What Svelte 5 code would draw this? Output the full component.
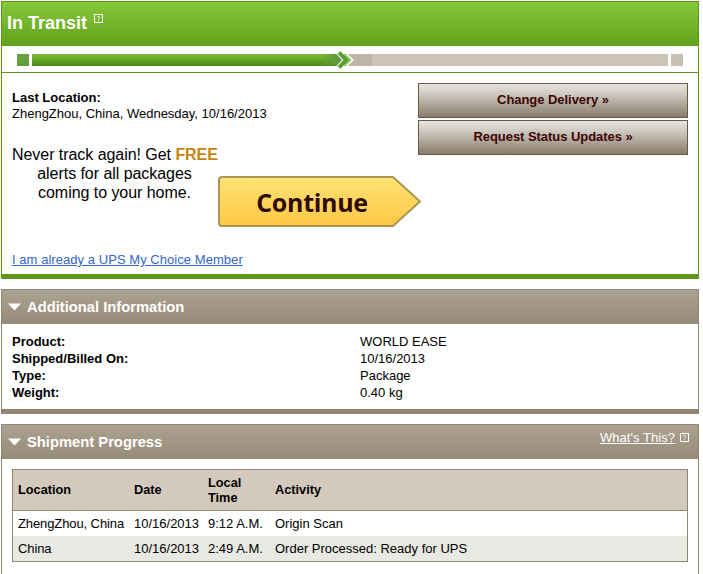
<script lang="ts">
	const info = [
		['Product:', 'WORLD EASE'],
		['Shipped/Billed On:', '10/16/2013'],
		['Type:', 'Package'],
		['Weight:', '0.40 kg'],
	];
	const scans = [
		['ZhengZhou, China', '10/16/2013', '9:12 A.M.', 'Origin Scan'],
		['China', '10/16/2013', '2:49 A.M.', 'Order Processed: Ready for UPS'],
	];
</script>

{#snippet help()}
	<svg class="help" width="9" height="9" viewBox="0 0 9 9" aria-hidden="true">
		<rect x="0.5" y="0.5" width="8" height="8" fill="none" stroke="#fff" />
		<path d="M3.2 3.2 L3.6 2.6 H5.2 L5.7 3.2 V3.9 L4.5 4.7 V5.4 M4.5 6.2 V7" fill="none" stroke="#fff" stroke-width="0.8" />
	</svg>
{/snippet}

{#snippet arrow()}
	<svg class="arrow" width="14" height="8" viewBox="0 0 14 8" aria-hidden="true">
		<path d="M0 0.5 H13 L6.5 7.5 Z" fill="#fff" />
	</svg>
{/snippet}

<div class="page">
	<section class="status">
		<header class="status-head">
			<h1>In Transit</h1>
			{@render help()}
		</header>
		<div class="track">
			<span class="seg seg-start"></span>
			<span class="seg seg-done"></span>
			<span class="seg seg-todo"></span>
			<span class="seg seg-end"></span>
			<svg class="chevron" width="18" height="18" viewBox="0 0 18 18" aria-hidden="true">
				<path d="M8 3.5 L13.5 9 L8 14.5" fill="none" stroke="#fff" stroke-width="6" stroke-miterlimit="8" />
				<path d="M3 1.5 L10 9 L3 16.5" fill="none" stroke="#fff" stroke-width="6" stroke-miterlimit="8" />
				<path d="M8 3.5 L13.5 9 L8 14.5" fill="none" stroke="#8fc760" stroke-width="3" stroke-miterlimit="8" />
				<path d="M3 1.5 L10 9 L3 16.5" fill="none" stroke="#5a9a30" stroke-width="4" stroke-miterlimit="8" />
			</svg>
		</div>
		<div class="status-body">
			<div class="status-main">
				<div class="location">
					<strong>Last Location:</strong>
					<span>ZhengZhou, China, Wednesday, 10/16/2013</span>
				</div>
				<div class="promo">
					<p>Never track again! Get <b>FREE</b><br /><span>alerts for all packages</span><br /><span>coming to your home.</span></p>
					<button class="continue">
						<svg width="204" height="52" viewBox="0 0 204 52" aria-hidden="true">
							<defs>
								<linearGradient id="gold" x1="0" y1="0" x2="0" y2="1">
									<stop offset="0" stop-color="#ffe277" />
									<stop offset="1" stop-color="#fdc843" />
								</linearGradient>
							</defs>
							<path d="M4 1 H175 L202 25.5 L175 50 H4 Q1 50 1 47 V4 Q1 1 4 1 Z" fill="url(#gold)" stroke="#ab9554" stroke-width="2" />
						</svg>
						<span>Continue</span>
					</button>
				</div>
				<a class="member" href="#member">I am already a UPS My Choice Member</a>
			</div>
			<div class="actions">
				<button class="action">Change Delivery »</button>
				<button class="action">Request Status Updates »</button>
			</div>
		</div>
	</section>

	<section class="panel panel-info">
		<header class="panel-head">
			{@render arrow()}
			<h2>Additional Information</h2>
		</header>
		<dl class="info">
			{#each info as [label, value]}
				<dt>{label}</dt>
				<dd>{value}</dd>
			{/each}
		</dl>
	</section>

	<section class="panel panel-progress">
		<header class="panel-head">
			{@render arrow()}
			<h2>Shipment Progress</h2>
			<div class="whats">
				<a href="#whats">What's This?</a>
				{@render help()}
			</div>
		</header>
		<div class="table-wrap">
			<table>
				<thead>
					<tr>
						<th class="c-loc">Location</th>
						<th class="c-date">Date</th>
						<th class="c-time">Local<br />Time</th>
						<th>Activity</th>
					</tr>
				</thead>
				<tbody>
					{#each scans as row, i}
						<tr class:alt={i % 2 === 1}>
							{#each row as cell}
								<td>{cell}</td>
							{/each}
						</tr>
					{/each}
				</tbody>
			</table>
		</div>
	</section>
</div>

<style>
	:global(body) {
		margin: 0;
		background: #fff;
	}

	.page {
		width: 703px;
		height: 574px;
		overflow: hidden;
		padding: 1px 0 0 1px;
		box-sizing: border-box;
		font-family: 'Liberation Sans', Arial, sans-serif;
		font-size: 13px;
		line-height: 17px;
		color: #000;
	}

	.status {
		width: 698px;
		height: 278px;
		box-sizing: border-box;
		border: solid #5f9618;
		border-width: 1px 1px 5px;
		display: flex;
		flex-direction: column;
	}

	.status-head {
		height: 44px;
		flex-shrink: 0;
		background: linear-gradient(#86c83a, #63a01c);
		display: flex;
		align-items: flex-start;
		gap: 7px;
		padding-left: 5px;
	}

	h1 {
		margin: 11px 0 0;
		font-size: 18px;
		line-height: 20px;
		font-weight: bold;
		color: #fff;
	}

	.status-head .help {
		margin-top: 12px;
	}

	.track {
		position: relative;
		height: 27px;
		flex-shrink: 0;
		box-sizing: border-box;
		border-bottom: 1px solid #5f9618;
		display: flex;
		align-items: flex-start;
		padding: 8px 0 0 15px;
	}

	.seg {
		display: block;
		height: 12px;
	}

	.seg-start {
		width: 12px;
		background: linear-gradient(#6da545, #5f9a3a);
		margin-right: 3px;
	}

	.seg-done {
		width: 313px;
		background: linear-gradient(90deg, transparent 290px, #5f9a3a 304px), linear-gradient(#7ebb32, #4f8a1a);
	}

	.seg-todo {
		width: 323px;
		margin-right: 3px;
		background: linear-gradient(90deg, #bfb4a8 0 27px, #cec3b7 27px);
	}

	.seg-end {
		width: 12px;
		background: #c9beb2;
	}

	.chevron {
		position: absolute;
		left: 334px;
		top: 5px;
	}

	.status-body {
		flex: 1;
		display: flex;
		justify-content: space-between;
		padding: 10px 10px 0;
		min-height: 0;
	}

	.status-main {
		width: 406px;
		flex-shrink: 0;
		display: flex;
		flex-direction: column;
	}

	.location {
		display: flex;
		flex-direction: column;
		margin-top: 7px;
		line-height: 16px;
	}

	.promo {
		display: flex;
		margin-top: 23px;
		height: 94px;
	}

	.promo p {
		margin: 0;
		width: 205px;
		font-size: 16px;
		line-height: 19px;
		letter-spacing: -0.05px;
		flex-shrink: 0;
		white-space: nowrap;
	}

	.promo p span {
		display: inline-block;
		text-align: center;
		width: 205px;
	}

	.promo b {
		color: #c98410;
	}

	.continue {
		position: relative;
		flex-shrink: 0;
		width: 204px;
		height: 52px;
		margin-top: 31px;
		margin-left: 1px;
		padding: 0;
		border: 0;
		background: none;
	}

	.continue svg {
		position: absolute;
		left: 0;
		top: 0;
	}

	.continue span {
		position: relative;
		display: block;
		padding-right: 16px;
		font-family: 'Open Sans', sans-serif;
		font-weight: bold;
		font-size: 25px;
		letter-spacing: -0.3px;
		line-height: 48px;
		color: #2e0a02;
	}

	.member {
		margin-top: 12px;
		color: #3465cc;
		white-space: nowrap;
		letter-spacing: 0.05px;
	}

	.actions {
		display: flex;
		flex-direction: column;
		gap: 2px;
		width: 270px;
		flex-shrink: 0;
	}

	.action {
		height: 35px;
		padding: 0 0 2px;
		box-sizing: border-box;
		border: 1px solid #665a45;
		background: linear-gradient(#e6e5df, #d2cfc7 25%, #8a7c6b);
		font: bold 13px 'Liberation Sans', Arial, sans-serif;
		letter-spacing: -0.05px;
		color: #3d0505;
	}

	.panel {
		width: 698px;
		box-sizing: border-box;
		border: solid #928675;
		border-width: 1px 1px 5px;
	}

	.panel-info {
		height: 125px;
		margin-top: 10px;
	}

	.panel-progress {
		height: 155px;
		margin-top: 10px;
	}

	.panel-head {
		height: 34px;
		box-sizing: border-box;
		background: linear-gradient(#ada291, #968a78);
		display: flex;
		align-items: center;
		padding-left: 6px;
		color: #fff;
	}

	.panel-head .arrow {
		margin-right: 5px;
	}

	h2 {
		margin: 0;
		font-size: 14.75px;
		line-height: 17px;
		font-weight: bold;
	}

	.info {
		margin: 9px 0 0 10px;
		display: grid;
		grid-template-columns: 348px 1fr;
	}

	.info dt {
		font-weight: bold;
	}

	.info dd {
		margin: 0;
	}

	.whats {
		margin-left: auto;
		margin-right: 9px;
		align-self: flex-start;
		margin-top: 4px;
		display: flex;
		align-items: center;
		gap: 5px;
	}

	.whats a {
		color: #fff;
		letter-spacing: 0.05px;
	}

	.table-wrap {
		padding: 10px 10px 0;
	}

	table {
		width: 100%;
		border-collapse: collapse;
		border: 1px solid #928675;
	}

	thead tr {
		background: #d3cabd;
		border-bottom: 1px solid #928675;
	}

	th {
		height: 38px;
		padding: 0 0 2px 5px;
		text-align: left;
		font-size: 12.75px;
		line-height: 15px;
	}

	th.c-time {
		padding-bottom: 0;
	}

	td {
		height: 25px;
		padding: 0 0 0 5px;
		white-space: nowrap;
	}

	td:first-child {
		letter-spacing: -0.1px;
	}

	.c-loc {
		width: 111px;
	}

	.c-date {
		width: 69px;
	}

	.c-time {
		width: 62px;
	}

	.alt {
		background: #e9e9e3;
	}
</style>
